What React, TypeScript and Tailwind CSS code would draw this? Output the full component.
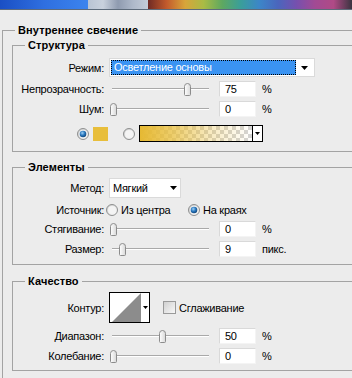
import React from "react";

const Label = ({ children }: { children: React.ReactNode }) => (
  <span className="w-[91px] shrink-0 text-right whitespace-nowrap">{children}</span>
);

const Thumb = () => (
  <svg width="9" height="13" viewBox="0 0 9 13">
    <defs>
      <linearGradient id="tg" x1="0" y1="0" x2="1" y2="0">
        <stop offset="0" stopColor="#ffffff" />
        <stop offset="1" stopColor="#d8d8d8" />
      </linearGradient>
    </defs>
    <path d="M1.5 3.5 Q1.5 0.5 4.5 0.5 Q7.5 0.5 7.5 3.5 L7.5 11.5 Q7.5 12.5 6.5 12.5 L2.5 12.5 Q1.5 12.5 1.5 11.5 Z" fill="url(#tg)" stroke="#8c8c8c" strokeWidth="1" />
  </svg>
);

const Slider = ({ pos }: { pos: number }) => (
  <div className="relative w-[110px] h-[16px] shrink-0">
    <div className="absolute left-[3px] right-[10px] top-[7px] h-[2px] border-t border-[#a9a9a9] border-b border-b-white" />
    <div className="absolute top-[2px] h-[13px] w-[9px]" style={{ left: pos }}>
      <Thumb />
    </div>
  </div>
);

const Input = ({ value }: { value: string }) => (
  <div className="w-[37px] h-[16px] shrink-0 bg-white border border-[#d9d9d9] border-b-[#f4f4f4] border-r-[#f4f4f4] pl-[5px] flex items-center leading-none">
    {value}
  </div>
);

const SliderRow = ({ label, pos, value, unit, mt }: { label: string; pos: number; value: string; unit: string; mt: string }) => (
  <div className={`flex items-center h-[16px] ${mt}`}>
    <Label>{label}</Label>
    <div className="ml-[5px] flex items-center">
      <Slider pos={pos} />
      <Input value={value} />
      <span className="ml-[6px]">{unit}</span>
    </div>
  </div>
);

const Radio = ({ checked }: { checked?: boolean }) => (
  <svg width="12" height="12" viewBox="0 0 12 12" className="shrink-0">
    <defs>
      <linearGradient id="rb" x1="0" y1="0" x2="1" y2="1">
        <stop offset="0" stopColor="#c8c8c8" />
        <stop offset="1" stopColor="#ffffff" />
      </linearGradient>
      <radialGradient id="rd" cx="0.4" cy="0.35" r="0.7">
        <stop offset="0" stopColor="#9fd0f5" />
        <stop offset="0.5" stopColor="#2a79bf" />
        <stop offset="1" stopColor="#0d3f73" />
      </radialGradient>
    </defs>
    <circle cx="6" cy="6" r="5.5" fill="url(#rb)" stroke="#8e8f8f" strokeWidth="1" />
    <circle cx="6" cy="6" r="4" fill="#f4f4f4" />
    {checked && <circle cx="6" cy="6" r="3.3" fill="url(#rd)" />}
  </svg>
);

const DownArrow = ({ w = 7 }: { w?: number }) => (
  <svg width={w} height={Math.ceil(w / 2)} viewBox={`0 0 ${w} ${Math.ceil(w / 2)}`}>
    <polygon points={`0,0 ${w},0 ${w / 2},${Math.ceil(w / 2)}`} fill="#000" />
  </svg>
);

export default function App() {
  return (
    <div
      className="w-[352px] h-[378px] overflow-hidden bg-[#ececec] text-[11px] leading-[14px] tracking-[-0.25px] text-black"
      style={{ fontFamily: '"Liberation Sans", Arial, sans-serif' }}
    >
      {/* top strip */}
      <div className="flex h-[10px] border-b border-[#5d6b7b]">
        <div className="w-[88px] bg-[linear-gradient(to_right,#1a4fc4,#2f6fe0,#3c84ee)]" />
        <div className="w-[60px] bg-[linear-gradient(to_right,#b9c4d4,#c9d1dd,#8f9bb0,#aeb9ca,#c4ccd8)]" />
        <div className="flex-1 bg-[linear-gradient(to_right,#6f2a24,#c25a2c,#d8a53a,#a9bb45,#5ea860,#3a9e9a,#3c86c8,#4a66bd,#7650ae,#a24a94,#b04a86,#3a3440)]" />
      </div>

      <div className="pl-[2px] pt-[13px]">
        <fieldset className="border-l border-t border-[#a3a3a3] pl-[9px] pt-[1px] pb-[30px] m-0 min-w-0">
          <legend className="ml-[3px] px-[3px] font-bold tracking-[0.1px] leading-[14px] h-[14px]">Внутреннее свечение</legend>

          {/* Структура */}
          <fieldset className="border-l border-t border-b border-[#a3a3a3] pb-[9px] m-0 min-w-0">
            <legend className="ml-[12px] px-[3px] font-bold tracking-[0.1px] leading-[14px] h-[14px]">Структура</legend>
            <div className="flex items-center h-[19px] mt-[6px]">
              <Label>Режим:</Label>
              <div className="ml-[5px] w-[206px] h-[19px] bg-white border border-[#dadada] flex items-center pl-[1px] pr-[2px]">
                <div className="w-[185px] h-[15px] bg-[#3a93f2] border border-dotted border-black text-white flex items-center pl-[2px] leading-none">
                  Осветление основы
                </div>
                <div className="flex-1 flex justify-center items-center">
                  <DownArrow />
                </div>
              </div>
            </div>
            <SliderRow label="Непрозрачность:" pos={74} value="75" unit="%" mt="mt-[4px]" />
            <SliderRow label="Шум:" pos={0} value="0" unit="%" mt="mt-[4px]" />
            <div className="flex items-center h-[17px] mt-[8px] pl-[64px]">
              <Radio checked />
              <div className="ml-[4px] w-[15px] h-[14px] bg-[#e8be3b]" />
              <div className="ml-[15px]">
                <Radio />
              </div>
              <div className="ml-[4px] w-[124px] h-[17px] border border-black flex bg-white">
                <div className="w-[112px] h-full bg-[repeating-conic-gradient(#d4d4d4_0_25%,#ffffff_0_50%)] bg-[length:8px_8px]">
                  <div className="w-full h-full bg-[linear-gradient(to_right,#e6b933,rgba(232,190,60,0.75)_30%,rgba(232,190,60,0.3)_65%,rgba(232,190,60,0))]" />
                </div>
                <div className="flex-1 border-l border-black flex items-center justify-center">
                  <DownArrow w={5} />
                </div>
              </div>
            </div>
          </fieldset>

          {/* Элементы */}
          <fieldset className="border-l border-t border-b border-[#a3a3a3] pb-[7px] mt-[8px] m-0 min-w-0">
            <legend className="ml-[12px] px-[3px] font-bold tracking-[0.1px] leading-[14px] h-[14px]">Элементы</legend>
            <div className="flex items-center h-[20px] mt-[4px]">
              <Label>Метод:</Label>
              <div className="ml-[5px] w-[72px] h-[20px] bg-white border border-[#dadada] flex items-center pl-[3px] pr-[3px]">
                <span className="flex-1 leading-none">Мягкий</span>
                <DownArrow />
              </div>
            </div>
            <div className="flex items-center h-[14px] mt-[5px]">
              <Label>Источник:</Label>
              <div className="ml-[2px] w-[82px] flex items-center">
                <Radio />
                <span className="ml-[3px]">Из центра</span>
              </div>
              <Radio checked />
              <span className="ml-[3px]">На краях</span>
            </div>
            <SliderRow label="Стягивание:" pos={0} value="0" unit="%" mt="mt-[4px]" />
            <SliderRow label="Размер:" pos={9} value="9" unit="пикс." mt="mt-[4px]" />
          </fieldset>

          {/* Качество */}
          <fieldset className="border-l border-t border-b border-[#a3a3a3] pb-[6px] mt-[9px] m-0 min-w-0">
            <legend className="ml-[12px] px-[3px] font-bold tracking-[0.1px] leading-[14px] h-[14px]">Качество</legend>
            <div className="flex items-center h-[31px] mt-[4px]">
              <Label>Контур:</Label>
              <div className="ml-[5px] w-[41px] h-[31px] border border-black bg-white flex">
                <svg width="31" height="29" viewBox="0 0 31 29" className="shrink-0">
                  <polygon points="2,29 31,0 31,29" fill="#8c8c8c" />
                </svg>
                <div className="flex-1 flex items-center justify-center">
                  <DownArrow w={5} />
                </div>
              </div>
              <div className="ml-[13px] w-[13px] h-[13px] border border-[#9a9a9a] bg-[linear-gradient(135deg,#d0d0d0,#f8f8f8)]" />
              <span className="ml-[3px]">Сглаживание</span>
            </div>
            <SliderRow label="Диапазон:" pos={49} value="50" unit="%" mt="mt-[5px]" />
            <SliderRow label="Колебание:" pos={0} value="0" unit="%" mt="mt-[4px]" />
          </fieldset>
        </fieldset>
      </div>
    </div>
  );
}
